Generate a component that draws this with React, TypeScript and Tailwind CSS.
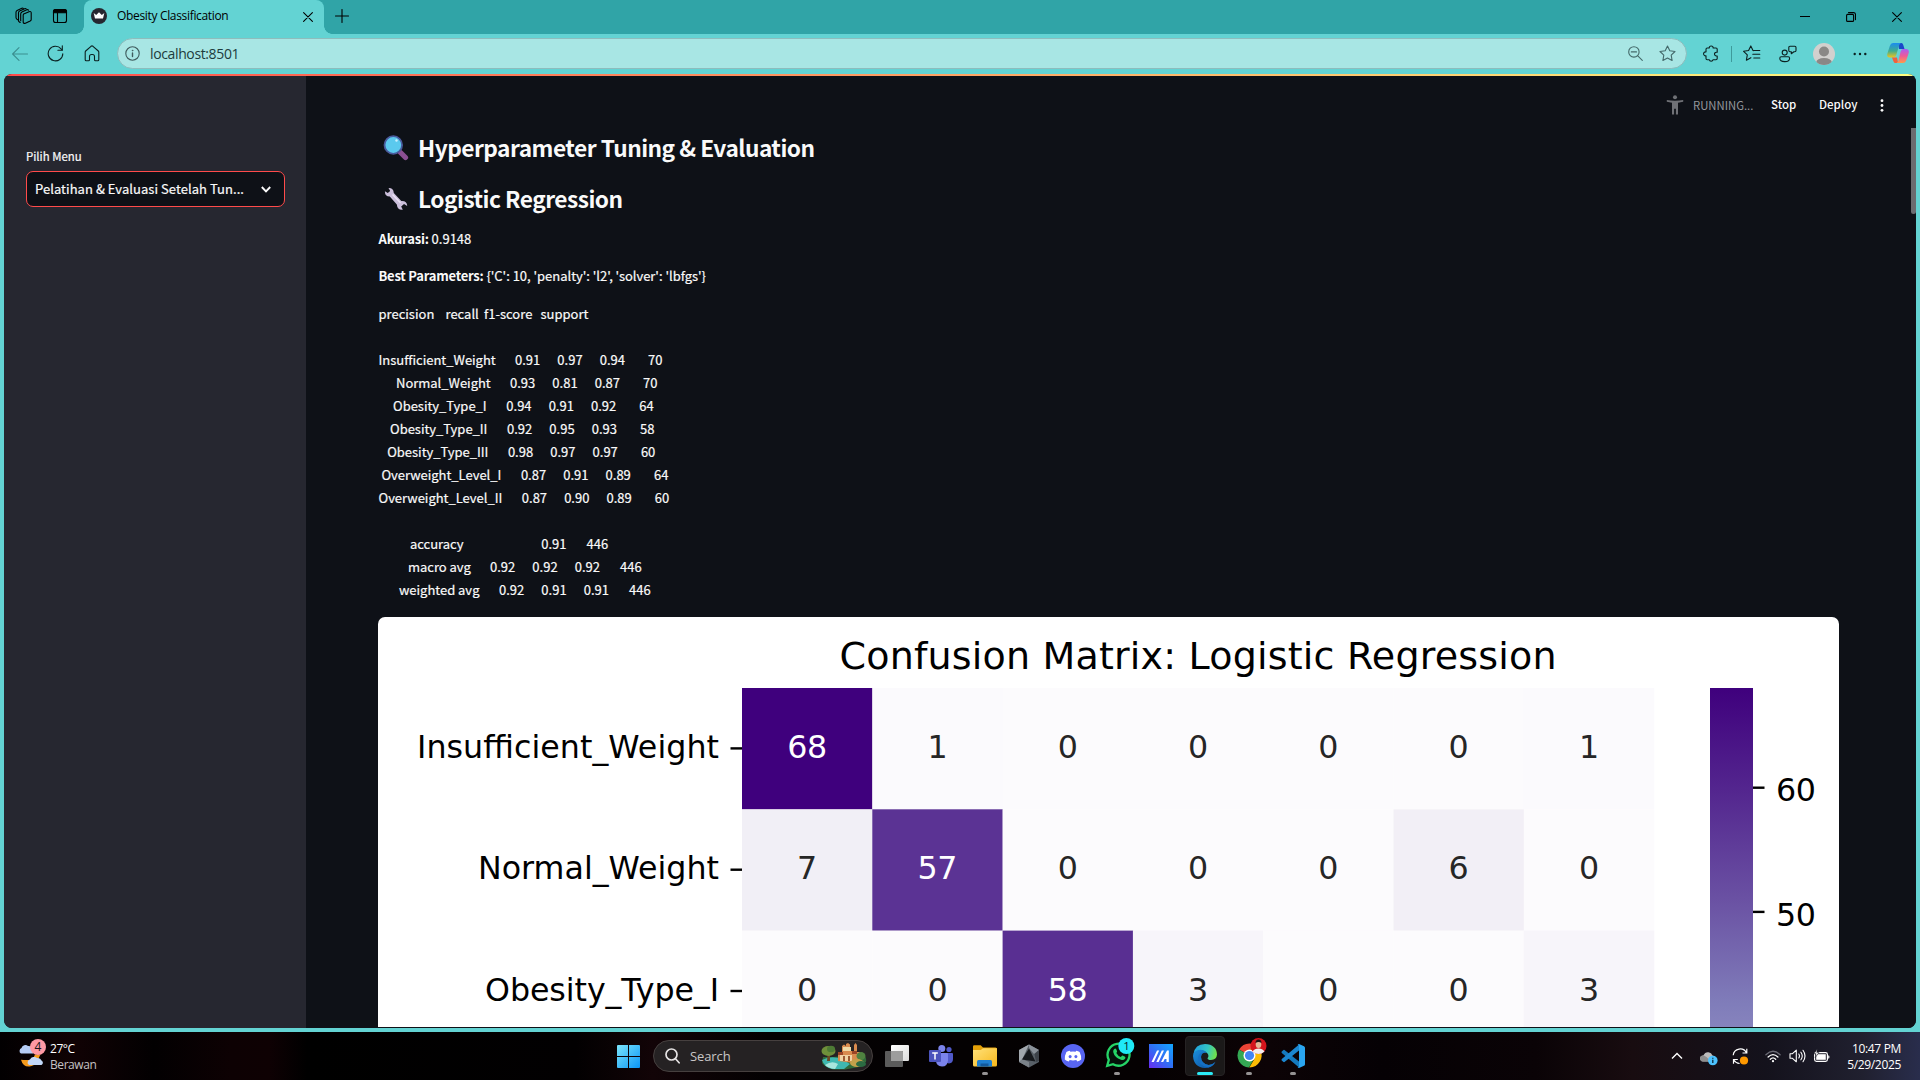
import React from "react";

type IconProps = { className?: string };

const stroke = { fill: "none", stroke: "currentColor", strokeWidth: 1.1, strokeLinecap: "round", strokeLinejoin: "round" } as const;

/* ---------- Browser chrome icons ---------- */

const WorkspacesIcon = () => (
  <svg width="18" height="18" viewBox="0 0 18 18" {...stroke}>
    <path d="M8.700 6.900 14 4.700q2-.7 2.200 1.100v6.700q0 1-1 1.500l-4.800 2.200q-2 .7-2.200-1.100V8.300q0-.9.500-1.400z" />
    <path d="M5.700 13.800V7q0-1.500 1.200-2.100L11.800 2.700q1-.4 1.700.4" />
    <path d="M5.200 15.500 4.400 15q-.9-.5-.9-1.500V5.700q0-1.200 1.100-1.700L9.600 1.700q1-.4 1.600.2" />
    <path d="M2.600 12.800Q1 12 1 10.500V5.200Q1 4 2.100 3.500L6.800 1.300q.9-.4 1.600.1" />
  </svg>
);

const TabActionsIcon = () => (
  <svg width="16" height="16" viewBox="0 0 16 16" {...stroke}>
    <rect x="1.500" y="1.500" width="13" height="13" rx="2" />
    <path d="M1.500 3.500q0-2 2-2h9q2 0 2 2v1.300h-13z" fill="currentColor" />
    <path d="M5.500 5v9.500" />
  </svg>
);

const CrownFavicon = () => (
  <svg width="16" height="16" viewBox="0 0 16 16">
    <circle cx="8" cy="8" r="8" fill="#262730" />
    <path d="m2.700 5 2.500 1.900L8 4.300l2.800 2.600L13.300 5 12 10.500H4z" fill="#fff" />
  </svg>
);

const CloseIcon = ({ className }: IconProps) => (
  <svg width="10" height="10" viewBox="0 0 10 10" className={className} {...stroke}>
    <path d="m.6.6 8.800 8.800M9.400.6.6 9.400" />
  </svg>
);

const PlusIcon = () => (
  <svg width="14" height="14" viewBox="0 0 14 14" {...stroke}>
    <path d="M7 .5v13M.5 7h13" />
  </svg>
);

const BackIcon = () => (
  <svg width="16" height="14" viewBox="0 0 16 14" className="text-[#3b8f90]" {...stroke}>
    <path d="M7 .6.6 7 7 13.400M.8 7h14.700" />
  </svg>
);

const RefreshIcon = () => (
  <svg width="17" height="17" viewBox="0 0 17 17" {...stroke}>
    <path d="M15.800 8.700a7.300 7.300 0 1 1-1.700-4.800l1 1.100" />
    <path d="M15.300.8v4.400h-4.400" />
  </svg>
);

const HomeIcon = () => (
  <svg width="16" height="17" viewBox="0 0 16 17" {...stroke}>
    <path d="M1.200 7.200q0-.7.500-1.200L7 1.300q1-.8 2 0L14.300 6q.5.500.5 1.200v7.600q0 1-1 1h-2.300q-1 0-1-1v-3.300q0-2-2-2h-1q-2 0-2 2v3.300q0 1-1 1H2.200q-1 0-1-1z" />
  </svg>
);

const InfoIcon = () => (
  <svg width="15" height="15" viewBox="0 0 15 15" className="text-[#3f5b5d]" {...stroke}>
    <circle cx="7.500" cy="7.500" r="6.700" />
    <path d="M7.500 7v3.500" strokeWidth="1.400" />
    <circle cx="7.500" cy="4.600" r=".5" fill="currentColor" strokeWidth=".5" />
  </svg>
);

const ZoomOutIcon = () => (
  <svg width="15" height="15" viewBox="0 0 15 15" {...stroke}>
    <circle cx="5.900" cy="5.900" r="5.200" />
    <path d="m9.800 9.800 4.500 4.500M3.300 5.900h5.200" />
  </svg>
);

const StarIcon = () => (
  <svg width="17" height="17" viewBox="0 0 17 17" {...stroke}>
    <path d="m8.500 1 2.300 4.800 5.200.7-3.800 3.700.9 5.300-4.600-2.500-4.600 2.500.9-5.300L1 6.500l5.200-.7z" />
  </svg>
);

const PuzzleIcon = () => (
  <svg width="16" height="17" viewBox="0 0 16 17" {...stroke}>
    <path d="M6.200 3a2 2 0 1 1 4 0H13q1.200 0 1.200 1.200v3h-.8a1.900 1.900 0 1 0 0 3.800h.8v2.500q0 1.200-1.200 1.200h-2.900a2 2 0 0 1-3.900 0H4.200Q3 14.700 3 13.500v-2.700a2 2 0 1 1 0-3.900V4.200Q3 3 4.200 3z" />
  </svg>
);

const FavoritesIcon = () => (
  <svg width="18" height="17" viewBox="0 0 18 17" {...stroke}>
    <path d="M10.500 5.600 10 5.500 7.800.9 5.600 5.500l-5 .8 3.700 3.500-.9 5.400 4.500-2.500" />
    <path d="M10.800 5.500h6M9.800 9.300h7M10.800 13h6" />
  </svg>
);

const CollabIcon = () => (
  <svg width="18" height="18" viewBox="0 0 18 18" {...stroke}>
    <circle cx="5.700" cy="7.600" r="2.500" />
    <path d="M2.200 11.800h7q1.400 0 1.400 1.400 0 3.400-4.900 3.400T.8 13.200q0-1.400 1.400-1.400z" />
    <path d="M11 1.300h4.800q1.200 0 1.200 1.200v3q0 1.200-1.200 1.200h-.9l-2.600 2V6.700H11q-1.200 0-1.200-1.200v-3q0-1.200 1.200-1.200z" />
  </svg>
);

const Avatar = () => (
  <svg width="22" height="22" viewBox="0 0 22 22">
    <clipPath id="avatarClip"><circle cx="11" cy="11" r="11" /></clipPath>
    <g clipPath="url(#avatarClip)">
      <rect width="22" height="22" fill="#d2d0ce" />
      <circle cx="11" cy="8.500" r="5" fill="#8a8886" />
      <path d="M3 22v-2.500Q4 15 11 15t8 4.500V22z" fill="#8a8886" />
    </g>
  </svg>
);

const CopilotIcon = () => (
  <svg width="22" height="21" viewBox="0 0 22 21">
    <defs>
      <linearGradient id="cpA" x1="0" y1="0" x2="0" y2="1"><stop offset="0" stopColor="#1b8cf0" /><stop offset=".55" stopColor="#3fae8e" /><stop offset="1" stopColor="#f4c51b" /></linearGradient>
      <linearGradient id="cpB" x1="0" y1="0" x2="0" y2="1"><stop offset="0" stopColor="#a85cf5" /><stop offset=".5" stopColor="#ee5a96" /><stop offset="1" stopColor="#ff9a4a" /></linearGradient>
    </defs>
    <path d="M11 0h3.500q1.200 0 1.700 1.700L17.500 6H12z" fill="#1a48c8" />
    <path d="M6 0h8q-1.400.5-2 2.500L9.300 12q-.8 2.600-3.300 2.600H2.500Q-.5 14.500.4 10.500L2.800 3Q3.700 0 6 0z" fill="url(#cpA)" />
    <path d="M5 14.500h5l.8 4q.4 1.500-.8 1.500H8.500q-1.500 0-2-1.500z" fill="#f3603c" />
    <path d="M16 6h3.500q3 .2 2.200 4l-2.500 7.500Q18.300 20 16 20H9.500q1.400-.5 2-2.500L13.600 8.500Q14.300 6 16 6z" fill="url(#cpB)" />
  </svg>
);

/* ---------- Page icons ---------- */

const RunningMan = () => (
  <svg width="18" height="20" viewBox="0 0 18 20" fill="#6f7176">
    <circle cx="9" cy="2.200" r="2" />
    <path d="M.8 5.100Q9 6.300 17.200 5.100v1.700L12 7.700V19.500H9.900v-5.700H8.100v5.700H6V7.700L.8 6.800z" />
  </svg>
);

const MagnifierEmoji = () => (
  <svg width="26" height="26" viewBox="0 0 26 26">
    <path d="m17.500 17.500 5 5" stroke="#8b4f93" strokeWidth="5.200" strokeLinecap="round" />
    <circle cx="10.300" cy="10" r="8.800" fill="#5bc9ee" stroke="#4a5a9c" strokeWidth="1.800" />
    <circle cx="13.500" cy="5.500" r="1.200" fill="#c9f0ff" />
  </svg>
);

const WrenchEmoji = () => (
  <svg width="24" height="24" viewBox="0 0 24 24">
    <path d="M4.500 1Q9.500.8 9.800 6l7.500 8q5.700-.4 5.900 5l-3.200-2-2.800 2.500 1.600 3.300q-5.400.6-6-5.300L5.800 9.500Q.8 9.500.9 4.200l2.900 1.900L6.200 4z" fill="#cbbfdb" />
    <path d="m8.500 7.500 8 8.400" stroke="#eee5f7" strokeWidth="1.300" />
  </svg>
);

/* ---------- Taskbar icons ---------- */

const WeatherIcon = () => (
  <svg width="28" height="30" viewBox="0 0 28 30">
    <path d="M3 14.500a3 3 0 0 1 .5-5.400 4 4 0 0 1 6.500-2A5 5 0 0 1 15 14.500z" fill="#b6cdf5" />
    <path d="M17 15.500q-2 5.500-6 5.500-4 .3-8-.3Q5 28 11.500 27.500q4.500-.5 7-4l4-8z" fill="#f59a1c" />
    <path d="M11 26a3 3 0 0 1 1-5.500 4.500 4.500 0 0 1 7-1.500 4 4 0 0 1 4.500 2.500 2.500 2.500 0 0 1 0 4.500z" fill="#c2d7f8" />
    <circle cx="20" cy="8" r="8" fill="#ff99a4" />
    <text x="20" y="12.200" textAnchor="middle" fontSize="12" fontFamily="Open Sans, sans-serif" fill="#17171a">4</text>
  </svg>
);

const StartIcon = () => (
  <svg width="23" height="23" viewBox="0 0 23 23">
    <defs><linearGradient id="win" x1="0" y1="0" x2="1" y2="1"><stop stopColor="#7be5fc" /><stop offset="1" stopColor="#0a95f5" /></linearGradient></defs>
    <path d="M0 1q0-1 1-1h10v11H0zM12 0h10q1 0 1 1v10H12zM0 12h11v11H1q-1 0-1-1zM12 12h11v10q0 1-1 1H12z" fill="url(#win)" />
  </svg>
);

const SearchIcon = () => (
  <svg width="15" height="16" viewBox="0 0 15 16" fill="none" stroke="#e6e4e4" strokeWidth="1.700" strokeLinecap="round">
    <circle cx="6.500" cy="6.500" r="5.500" />
    <path d="m10.500 10.800 3.600 4" />
  </svg>
);

const SearchHighlight = () => (
  <svg width="46" height="27" viewBox="0 0 46 27">
    <path d="M2 14h10l12-1 18-3q4 5 3 9l-7 5-14 2.500H12Q4 24 1 20z" fill="#2f6a3a" />
    <path d="M1 17q9-5 20-1l8 5-6 5H11Q3 24 1 17z" fill="#3fb8b0" />
    <path d="M4 22q7-5 13-1l-3 5q-7-1-10-4z" fill="#a8e6dc" />
    <path d="M6.500 12h2.500v6H6z" fill="#6b4a25" />
    <ellipse cx="7.500" cy="8" rx="7" ry="5" fill="#6f8f3a" />
    <ellipse cx="10" cy="6" rx="4" ry="3.200" fill="#4d7a35" />
    <path d="M17 18V9h4V3l2-1.500 2 1.500V1l2-1 2 1.500V8h4V2l1.500-2L36 2v7h3v8l-6 3z" fill="#d98b4e" />
    <path d="M22 4h8v4h-8z" fill="#eed9a6" />
    <path d="M17 9h5v3h-5zM31 8h5v3h-5z" fill="#9c4526" />
    <path d="M19 12h12v6H19z" fill="#f0d3a4" />
    <path d="M22 13h2v5h-2zM27 13h2v5h-2z" fill="#9c5a32" />
    <ellipse cx="40" cy="13" rx="4.500" ry="4" fill="#4f8240" />
    <ellipse cx="36" cy="20" rx="7" ry="4" fill="#c3a04a" />
    <ellipse cx="40" cy="21" rx="5" ry="3" fill="#2c6b42" />
  </svg>
);

const TaskViewIcon = () => (
  <svg width="24" height="22" viewBox="0 0 24 22">
    <defs><linearGradient id="tv" x1="0" y1="0" x2="1" y2="1"><stop stopColor="#fff" /><stop offset="1" stopColor="#dcdcdc" /></linearGradient></defs>
    <rect x="6" width="18" height="16" rx="1" fill="url(#tv)" />
    <rect y="6" width="18" height="16" rx="1" fill="#5b5b5b" />
    <path d="M6 6h11q1 0 1 1v9H6z" fill="#9d9d9d" />
  </svg>
);

const TeamsIcon = () => (
  <svg width="24" height="22" viewBox="0 0 24 22">
    <circle cx="20" cy="4.500" r="2.600" fill="#5059c9" />
    <circle cx="12.800" cy="3.500" r="3.500" fill="#7b83eb" />
    <path d="M16 8h7q1 0 1 1v5q0 4-4 4.500-4-.5-4-4.500z" fill="#5059c9" />
    <path d="M7 8h11q1 0 1 1v6.500q-.5 6-6 6-6-.3-6-6z" fill="#7b83eb" />
    <rect y="5" width="12" height="12" rx="1" fill="#4b53bc" />
    <path d="M3.200 8h5.600M6 8v6.500" stroke="#fff" strokeWidth="1.500" />
  </svg>
);

const ExplorerIcon = () => (
  <svg width="24" height="22" viewBox="0 0 24 22">
    <defs><linearGradient id="fold" x1="0" y1="0" x2="1" y2="1"><stop stopColor="#ffe17a" /><stop offset="1" stopColor="#f7b81c" /></linearGradient></defs>
    <path d="M0 1.500Q0 .3 1.200.3h6.500L10 2.500h12.500Q24 2.500 24 4v8H0z" fill="#e3a008" />
    <path d="M0 5h7.800L10 3.300h14V20q0 1.500-1.500 1.500h-21Q0 21.500 0 20z" fill="url(#fold)" />
    <path d="M4 21.500v-5Q4 15 5.500 15h12q1.500 0 1.500 1.500v5z" fill="#1f7fd0" />
    <path d="M7.500 18.500h8v3h-8z" fill="#12599c" />
  </svg>
);

const HexIcon = () => (
  <svg width="22" height="24" viewBox="0 0 22 24">
    <path d="M11 .5 21 6v12l-10 5.500L1 18V6z" fill="#596068" />
    <path d="M11 .5 21 6l-5 4-5-6z" fill="#8a9199" />
    <path d="M11 .5 1 6v12l3-2z" fill="#a2a8ae" />
    <path d="m1 18 3-3 7 3v5.500z" fill="#7b8289" />
    <path d="m11 4.500 6.500 13L4 15.500z" fill="#17191d" />
    <path d="m21 6-4.500 4 1.500 8 3-1z" fill="#3d4249" />
  </svg>
);

const DiscordIcon = () => (
  <svg width="24" height="24" viewBox="0 0 24 24">
    <circle cx="12" cy="12" r="12" fill="#5865f2" />
    <path d="M8.800 6.700q-2 .3-3.400 1.300-1.800 3.500-1.600 7.500 1.700 1.500 3.900 2l1-1.500q3.300.9 6.600 0l1 1.500q2.200-.5 3.900-2 .2-4-1.600-7.500-1.400-1-3.400-1.300l-.6 1.100q-2.600-.4-5.200 0z" fill="#fff" />
    <ellipse cx="9.100" cy="12.600" rx="1.500" ry="1.700" fill="#5865f2" />
    <ellipse cx="14.900" cy="12.600" rx="1.500" ry="1.700" fill="#5865f2" />
  </svg>
);

const WhatsAppIcon = () => (
  <svg width="30" height="30" viewBox="0 0 30 30">
    <path d="m2.200 27.800 1.600-6A11 11 0 1 1 8 26.200z" fill="#04110a" stroke="#25d366" strokeWidth="2.300" />
    <path d="M9.200 11q1.300-1.300 2 .2l.9 2q.2.700-.8 1.700 1.700 3 4.500 4.200l1.200-1.400q.5-.4 1 0l2 1q.8.500.2 1.700-1.500 2.200-4.200 1.300Q9.500 19.500 8.200 14q-.2-1.800 1-3z" fill="#25d366" />
    <circle cx="21.300" cy="8" r="8" fill="#1fe9f7" />
    <text x="21.500" y="12" textAnchor="middle" fontSize="11.500" fontFamily="Open Sans, sans-serif" fill="#0a2226">1</text>
  </svg>
);

const ArmouryIcon = () => (
  <svg width="24" height="24" viewBox="0 0 24 24">
    <defs><linearGradient id="arm" x1="0" y1="1" x2="1" y2="0"><stop stopColor="#6a2cf0" /><stop offset=".5" stopColor="#2f6ff5" /><stop offset="1" stopColor="#12a8ff" /></linearGradient></defs>
    <rect width="24" height="24" fill="url(#arm)" />
    <path d="M2.500 18 8 6.500h2.200L4.800 18zM7.300 18l5.500-11.500H15L9.600 18zM12 18l6-11.500h1.800V18h-2.300v-3h-1.800l-1.500 3z" fill="#fff" />
  </svg>
);

const EdgeIcon = () => (
  <svg width="24" height="24" viewBox="0 0 24 24">
    <defs>
      <linearGradient id="edA" x1="0" y1=".2" x2="1" y2=".4"><stop stopColor="#1f9fe0" /><stop offset=".6" stopColor="#33c6c4" /><stop offset="1" stopColor="#6fe04c" /></linearGradient>
      <linearGradient id="edB" x1="0" y1="0" x2="1" y2="1"><stop stopColor="#1b8edb" /><stop offset="1" stopColor="#0c4f9e" /></linearGradient>
    </defs>
    <path d="M.5 10Q2 0 12 0q11.500.5 12 10.500-.3 5-6 5.500-3.500 0-3.500-1.800 2-2.200-.2-5Q11 5.500 6 7 2 8 .5 10z" fill="url(#edA)" />
    <path d="M0 12q0-4.500 5-6 6-1 8.700 3Q8.500 8 8 13q0 6.500 7.500 8 3 .2 6-1.700Q18 24 12 24 .8 23.500 0 12z" fill="url(#edB)" />
    <path d="M8 13q0 6.500 7.500 8 3.500 0 7-3.300-2 4.500-7 5.800Q5.500 22 5 14q.5-5 5.500-5.800Q8 9.500 8 13z" fill="#1570c4" />
  </svg>
);

const ChromeIcon = () => (
  <svg width="30" height="30" viewBox="0 0 30 30">
    <path d="M12.500 17.500 2.100 11.500A12 12 0 0 1 22.900 11.500H12.500z" fill="#ea4335" />
    <path d="M12.500 17.500 2.100 11.500A12 12 0 0 0 12 29.500l5.200-9z" fill="#34a853" />
    <path d="M12.500 17.500h-.5L17.700 20.500 12.300 29.500A12 12 0 0 0 22.900 11.500H12.500z" fill="#fbbc05" />
    <circle cx="12.500" cy="17.500" r="6" fill="#fff" />
    <circle cx="12.500" cy="17.500" r="4.600" fill="#4285f4" />
    <circle cx="21.500" cy="8" r="8" fill="#d4141c" />
    <path d="M15.500 13.500q2-3 6-3t6 3Q25 16 21.500 16t-6-2.500z" fill="#f3eeee" />
    <ellipse cx="21.500" cy="6.500" rx="2.800" ry="3.600" fill="#e4b595" />
    <path d="M18.500 5q0-3.500 3-3.500t3 3.500q-3-2-6 0z" fill="#1c1212" />
  </svg>
);

const VSCodeIcon = () => (
  <svg width="24" height="24" viewBox="0 0 24 24">
    <path d="M1 7.200 2.500 6q.5-.3 1 0L18 17.500v6L.8 9q-.8-1 .2-1.800z" fill="#1479bd" />
    <path d="M1 16.800 2.500 18q.5.300 1 0L18 6.500v-6L.8 15q-.8 1 .2 1.800z" fill="#1b86cf" />
    <path d="m18 0 5 2.300q1 .5 1 1.500v16.400q0 1-1 1.500L18 24q-.8 0-1.500-.8.9.5 1.500-.6V1.500q-.6-1-1.500-.6Q17.200 0 18 0z" fill="#2aa5f0" />
  </svg>
);

const OneDriveIcon = () => (
  <svg width="18" height="15" viewBox="0 0 18 15">
    <path d="M3 10.500a3 3 0 0 1 .3-6Q5 .8 8.500 1.200q3 .3 4 3.300 3 .5 3 3l-1 3z" fill="#bcbcbc" />
    <path d="M3 10.500a3 3 0 0 1 .3-6q2-.3 7.700 6z" fill="#8e8e8e" />
    <circle cx="12.800" cy="9.500" r="4.800" fill="#4cc2ff" />
    <path d="M12.800 8.800v3.300M12.800 6.700v1" stroke="#0c2a3b" strokeWidth="1.300" />
  </svg>
);

const SyncIcon = () => (
  <svg width="17" height="17" viewBox="0 0 17 17" fill="none" stroke="#fff" strokeWidth="1.200">
    <path d="M1.200 7.200A7 7 0 0 1 14.500 5M10.500 5h4.300V.8M5.800 11.500H1.500v4.300M1.600 11.700q2 3.400 6 3.800" />
    <circle cx="12" cy="12.500" r="4.100" fill="#f90" stroke="none" />
  </svg>
);

const WifiIcon = () => (
  <svg width="16" height="13" viewBox="0 0 16 13" fill="none" stroke="#fff" strokeWidth="1.300" strokeLinecap="round">
    <path d="M.9 4.700q7.100-7 14.200 0" stroke="#6b6b75" />
    <path d="M3.100 7q4.900-4.800 9.800 0M5.300 9.200q2.700-2.600 5.400 0" />
    <circle cx="8" cy="11.200" r="1.100" fill="#fff" stroke="none" />
  </svg>
);

const VolumeIcon = () => (
  <svg width="17" height="14" viewBox="0 0 17 14" fill="none" stroke="#fff" strokeWidth="1.100" strokeLinecap="round" strokeLinejoin="round">
    <path d="M1 4.700h2.500L7.300 1.200v11.600L3.500 9.300H1z" />
    <path d="M9.800 5q1.300 2 0 4M11.900 3.200q2.700 3.800 0 7.600M14 1.300q4 5.700 0 11.400" />
  </svg>
);

const BatteryIcon = () => (
  <svg width="17" height="14" viewBox="0 0 17 14">
    <rect x="1.600" y="3.600" width="12.800" height="8.800" rx="1.800" fill="none" stroke="#fff" strokeWidth="1.200" />
    <rect x="3.200" y="5.200" width="9.600" height="5.600" fill="#fff" />
    <path d="M15.200 6.300q1.300.2 1.300 1.700t-1.300 1.700z" fill="#fff" />
    <path d="M4.200 0 1 4.700h2L2.200 8.500 6 3.500H3.800z" fill="#fff" stroke="#12121c" strokeWidth=".6" />
  </svg>
);

/* ---------- Browser ---------- */

const TabStrip = () => (
  <div className="flex h-[34px] shrink-0 items-center bg-[#30a4a7] text-black">
    <div className="flex w-[84px] shrink-0 items-center gap-[19px] pb-[2px] pl-[15px]">
      <WorkspacesIcon />
      <TabActionsIcon />
    </div>
    <div className="relative flex h-full w-[240px] shrink-0 items-center rounded-t-[8px] bg-[#63d3d3] pb-[2px] pl-[7px]">
      <span className="absolute -left-2 bottom-0 size-2 bg-[radial-gradient(circle_at_0_0,#30a4a7_7.500px,#63d3d3_8px)]" />
      <span className="absolute -right-2 bottom-0 size-2 bg-[radial-gradient(circle_at_100%_0,#30a4a7_7.500px,#63d3d3_8px)]" />
      <CrownFavicon />
      <span className="ml-[10px] w-[186px] whitespace-nowrap font-['Open_Sans',sans-serif] text-[12px] leading-4 tracking-[-0.330px]">Obesity Classification</span>
      <CloseIcon className="mt-px" />
    </div>
    <div className="pb-[3px] pl-[11px]"><PlusIcon /></div>
    <div className="ml-auto flex items-center gap-[36px] pr-[18px]">
      <svg width="10" height="10" viewBox="0 0 10 10" {...stroke}><path d="M0 4.500h10" /></svg>
      <svg width="10" height="10" viewBox="0 0 10 10" {...stroke}><rect x=".6" y="2.400" width="7" height="7" rx="1" /><path d="M2.500.6h5q2 0 2 2v5" /></svg>
      <CloseIcon />
    </div>
  </div>
);

const Toolbar = () => (
  <div className="flex h-[40px] shrink-0 items-center bg-[#63d3d3] pb-px text-[#0b2020]">
    <div className="flex w-[117px] items-center pl-3">
      <BackIcon />
      <span className="ml-[19px]"><RefreshIcon /></span>
      <span className="ml-[20px]"><HomeIcon /></span>
    </div>
    <div className="flex h-[31px] w-[1570px] items-center rounded-full border border-[#8dbdbd] bg-[#a8e6e4] pl-[7px] pr-[10px]">
      <InfoIcon />
      <span className="ml-[10px] font-['Open_Sans',sans-serif] text-[14px] tracking-[-0.370px] text-[#1d3c3d]">localhost:8501</span>
      <div className="ml-auto flex items-center gap-4 text-[#44696a]">
        <ZoomOutIcon />
        <StarIcon />
      </div>
    </div>
    <div className="ml-[16px]"><PuzzleIcon /></div>
    <div className="ml-[12px] h-4 w-px bg-[#3e9a9b]" />
    <div className="ml-[11px]"><FavoritesIcon /></div>
    <div className="ml-[18px]"><CollabIcon /></div>
    <div className="ml-[16px] pt-px"><Avatar /></div>
    <svg className="ml-[18px]" width="14" height="4" viewBox="0 0 14 4" fill="currentColor"><circle cx="1.700" cy="2" r="1.200" /><circle cx="7" cy="2" r="1.200" /><circle cx="12.300" cy="2" r="1.200" /></svg>
    <div className="ml-[20px]"><CopilotIcon /></div>
  </div>
);

/* ---------- Page ---------- */

const Sidebar = () => (
  <aside className="w-[302px] shrink-0 bg-[#262730] pl-[22px] pt-[69px]">
    <div className="h-[26px] text-[11.400px] leading-[22px] text-[#fafafa] [-webkit-text-stroke:0.200px]">Pilih Menu</div>
    <div className="flex h-[36px] w-[259px] items-center justify-between rounded-[7px] border border-[#ff4b4b] bg-[#0e1117] pl-[8px] pr-[13px] text-[13px]">
      <span className="tracking-[0.050px] [-webkit-text-stroke:0.200px]">Pelatihan &amp; Evaluasi Setelah Tun...</span>
      <svg width="10" height="7" viewBox="0 0 10 7" fill="none" stroke="#fafafa" strokeWidth="1.900"><path d="m.8 1 4.200 4.300L9.200 1" /></svg>
    </div>
  </aside>
);

type Row = { name: string; indent: string; width: string; values: string[]; support: string };

const classes: Row[] = [
  { name: "Insufficient_Weight", indent: "ml-0", width: "w-[136.500px]", values: ["0.91", "0.97", "0.94"], support: "70" },
  { name: "Normal_Weight", indent: "ml-[17.500px]", width: "w-[114px]", values: ["0.93", "0.81", "0.87"], support: "70" },
  { name: "Obesity_Type_I", indent: "ml-[14.500px]", width: "w-[113.300px]", values: ["0.94", "0.91", "0.92"], support: "64" },
  { name: "Obesity_Type_II", indent: "ml-[11.500px]", width: "w-[117px]", values: ["0.92", "0.95", "0.93"], support: "58" },
  { name: "Obesity_Type_III", indent: "ml-[8.700px]", width: "w-[120.700px]", values: ["0.98", "0.97", "0.97"], support: "60" },
  { name: "Overweight_Level_I", indent: "ml-[2.900px]", width: "w-[139.500px]", values: ["0.87", "0.91", "0.89"], support: "64" },
  { name: "Overweight_Level_II", indent: "ml-0", width: "w-[143.300px]", values: ["0.87", "0.90", "0.89"], support: "60" },
];

const totals: Row[] = [
  { name: "accuracy", indent: "ml-[31.500px]", width: "w-[46.500px]", values: ["", "", "0.91"], support: "446" },
  { name: "macro avg", indent: "ml-[29.500px]", width: "w-[82px]", values: ["0.92", "0.92", "0.92"], support: "446" },
  { name: "weighted avg", indent: "ml-[20.500px]", width: "w-[100px]", values: ["0.92", "0.91", "0.91"], support: "446" },
];

const ReportRow = ({ row }: { row: Row }) => (
  <div className="flex h-[23px] items-center whitespace-nowrap">
    <span className={`${row.indent} ${row.width} shrink-0 tracking-[-0.020px]`}>{row.name}</span>
    {row.values.map((v, i) => (
      <span key={i} className="w-[42.350px] shrink-0">{v}</span>
    ))}
    <span className={row.support.length === 2 ? "ml-[6px]" : "ml-[3px]"}>{row.support}</span>
  </div>
);

const matrix = [
  { label: "Insufficient_Weight", x: 40, w: 302, cells: [68, 1, 0, 0, 0, 0, 1] },
  { label: "Normal_Weight", x: 101, w: 241, cells: [7, 57, 0, 0, 0, 6, 0] },
  { label: "Obesity_Type_I", x: 108, w: 234, cells: [0, 0, 58, 3, 0, 0, 3] },
];

const shade: Record<number, string> = { 0: "#fcfbfd", 1: "#fbfafd", 3: "#f7f5fa", 6: "#f2eff6", 7: "#f1eff6", 57: "#5b3394", 58: "#592f92", 68: "#3f007d" };

const ConfusionMatrix = () => (
  <svg width="1461" height="410" viewBox="0 0 1461 410" className="block rounded-t-[7px] bg-white" fontFamily="DejaVu Sans, sans-serif" fontSize="31.700">
    <defs>
      <linearGradient id="purples" gradientUnits="userSpaceOnUse" x1="0" y1="71" x2="0" y2="493">
        <stop offset="0" stopColor="#3f007d" /><stop offset=".25" stopColor="#54278f" /><stop offset=".5" stopColor="#6a51a3" /><stop offset=".75" stopColor="#807dba" /><stop offset="1" stopColor="#9e9ac8" />
      </linearGradient>
    </defs>
    <text x="461.500" y="52" fontSize="38" textLength="717">Confusion Matrix: Logistic Regression</text>
    {matrix.map((row, r) => (
      <g key={row.label}>
        <text x={row.x - 1} y={140.700 + r * 121.500} textLength={row.w}>{row.label}</text>
        <rect x="352.500" y={130.200 + r * 121.300} width="12" height="2.400" />
        {row.cells.map((v, c) => (
          <g key={c}>
            <rect x={364 + c * 130.300} y={71 + r * 121.300} width="130.500" height="121.500" fill={shade[v]} />
            <text x={429 + c * 130.300} y={140.700 + r * 121.500} textAnchor="middle" letterSpacing="-.400" fill={v > 50 ? "#fff" : "#262626"}>{v}</text>
          </g>
        ))}
      </g>
    ))}
    <rect x="1332" y="71" width="43" height="345" fill="url(#purples)" />
    {[60, 50, 40].map((v, i) => (
      <g key={v}>
        <rect x="1375" y={169.500 + i * 124.200} width="11.500" height="2.400" />
        <text x="1398" y={184.300 + i * 124.200} letterSpacing="-.300">{v}</text>
      </g>
    ))}
  </svg>
);

const Main = () => (
  <main className="flex min-w-0 flex-1 bg-[#0e1117] text-[#fafafa]">
    <div className="min-w-0 flex-1 pl-[72px]">
      <div className="flex h-[46px] items-end justify-end pr-[27px] text-[12px]">
        <div className="flex h-[34px] items-center">
          <RunningMan />
          <span className="ml-[9px] w-[78px] text-[11.300px] text-[#94969b]">RUNNING...</span>
          <span className="w-[48px] text-[11.500px] font-medium">Stop</span>
          <span className="w-[61px] text-[11.500px] font-medium">Deploy</span>
          <svg width="4" height="13" viewBox="0 0 4 13" fill="#fafafa"><circle cx="2" cy="1.700" r="1.400" /><circle cx="2" cy="6.500" r="1.400" /><circle cx="2" cy="11.300" r="1.400" /></svg>
        </div>
      </div>
      <h2 className="flex h-[51px] items-center gap-[9px] pl-[5px] text-[22.700px] font-bold"><MagnifierEmoji /><span className="pt-px tracking-[-0.510px]">Hyperparameter Tuning &amp; Evaluation</span></h2>
      <h2 className="flex h-[51px] items-center gap-[10px] pl-[6px] text-[22.700px] font-bold"><WrenchEmoji /><span className="pt-px tracking-[-0.510px]">Logistic Regression</span></h2>
      <div className="pl-[0.500px] text-[13px] leading-[23px] [-webkit-text-stroke:0.200px]">
        <p className="mt-[3px]"><b className="tracking-[-0.200px] [-webkit-text-stroke:0]">Akurasi:</b> 0.9148</p>
        <p className="mt-[14px] tracking-[-0.030px]"><b className="tracking-[-0.230px] [-webkit-text-stroke:0]">Best Parameters:</b> {"{'C': 10, 'penalty': 'l2', 'solver': 'lbfgs'}"}</p>
        <div className="mt-[15px] flex h-[23px]">
          <span className="w-[67px]">precision</span>
          <span className="w-[38.500px]">recall</span>
          <span className="w-[56.500px]">f1-score</span>
          <span>support</span>
        </div>
        <div className="mt-[23px]">{classes.map((r) => <ReportRow key={r.name} row={r} />)}</div>
        <div className="mt-[23px]">{totals.map((r) => <ReportRow key={r.name} row={r} />)}</div>
      </div>
      <div className="mt-[16px]"><ConfusionMatrix /></div>
    </div>
    <div className="w-[5px] shrink-0 pt-[52px]"><div className="h-[86px] rounded-b-[3px] bg-[#6b6c70]" /></div>
  </main>
);

/* ---------- Taskbar ---------- */

const apps = [
  { icon: <TaskViewIcon />, state: "" },
  { icon: <TeamsIcon />, state: "" },
  { icon: <ExplorerIcon />, state: "open" },
  { icon: <HexIcon />, state: "" },
  { icon: <DiscordIcon />, state: "" },
  { icon: <WhatsAppIcon />, state: "open", badge: true },
  { icon: <ArmouryIcon />, state: "" },
  { icon: <EdgeIcon />, state: "active" },
  { icon: <ChromeIcon />, state: "open", badge: true },
  { icon: <VSCodeIcon />, state: "open" },
];

const Taskbar = () => (
  <div className="flex h-12 shrink-0 items-center overflow-hidden bg-[linear-gradient(90deg,#020001_0%,#100204_4%,#020001_8%,#0d0103_12%,#0e0103_14%,#000_16%,#020001_30%,#120407_34%,#030102_40%,#050102_60%,#0c0306_66%,#050104_72%,#0a0306_80%,#180c10_85%,#14121c_92%,#20202f_97%,#292d4c_100%)] font-['Open_Sans',sans-serif] text-white">
    <div className="flex w-[617px] shrink-0 items-center pl-[18px]">
      <div className="pb-1"><WeatherIcon /></div>
      <div className="ml-1 pt-px text-[12px] leading-4 tracking-[-0.430px]">
        <div>27°C</div>
        <div className="text-[#c5c2c3]">Berawan</div>
      </div>
    </div>
    <div className="pt-px"><StartIcon /></div>
    <div className="ml-[13px] flex h-8 w-[220px] items-center rounded-full border border-[#46403f] bg-[#252223] pl-[11px] pr-[5px]">
      <SearchIcon />
      <span className="ml-[10px] pt-px text-[13px] tracking-[-0.100px] text-[#c9c7c7]">Search</span>
      <div className="ml-auto"><SearchHighlight /></div>
    </div>
    <div className="ml-[2px] flex">
      {apps.map((a, i) => (
        <div key={i} className="flex h-12 w-[44px] justify-center">
          <div className={`relative flex h-10 w-10 items-center justify-center self-center rounded-[4px] ${a.state === "active" ? "border border-[#262324] bg-[#1b1919]" : ""}`}>
            <div className={a.badge ? "-mt-[6px] ml-[5px]" : ""}>{a.icon}</div>
            {a.state === "open" && <span className="absolute bottom-px left-[17px] h-[3px] w-[6px] rounded-full bg-[#959293]" />}
            {a.state === "active" && <span className="absolute bottom-0 left-[11px] h-[3px] w-[16px] rounded-full bg-[#2beaf6]" />}
          </div>
        </div>
      ))}
    </div>
    <div className="ml-auto flex items-center pr-[19px]">
      <svg width="12" height="8" viewBox="0 0 12 8" fill="none" stroke="#fff" strokeWidth="1.400"><path d="M1 6.500 6 1.500l5 5" /></svg>
      <span className="ml-[17px] pt-1"><OneDriveIcon /></span>
      <span className="ml-[14px]"><SyncIcon /></span>
      <span className="ml-[16px]"><WifiIcon /></span>
      <span className="ml-[8px]"><VolumeIcon /></span>
      <span className="ml-[7px] pb-px"><BatteryIcon /></span>
      <div className="w-[71px] pt-px text-right text-[12px] leading-4 tracking-[-0.330px]">
        <div>10:47 PM</div>
        <div>5/29/2025</div>
      </div>
    </div>
  </div>
);

export default function App() {
  return (
    <div className="flex h-[1080px] w-[1920px] flex-col overflow-hidden bg-[#63d3d3]">
      <TabStrip />
      <Toolbar />
      <div className="mx-1 mb-1 flex h-[954px] shrink-0 flex-col overflow-hidden rounded-[8px] bg-[#0e1117] font-['Noto_Sans_CJK_JP',sans-serif] text-[#fafafa]">
        <div className="h-[2px] shrink-0 bg-[linear-gradient(90deg,#ff4b4b,#fffd80)]" />
        <div className="flex min-h-0 flex-1">
          <Sidebar />
          <Main />
        </div>
      </div>
      <Taskbar />
    </div>
  );
}
